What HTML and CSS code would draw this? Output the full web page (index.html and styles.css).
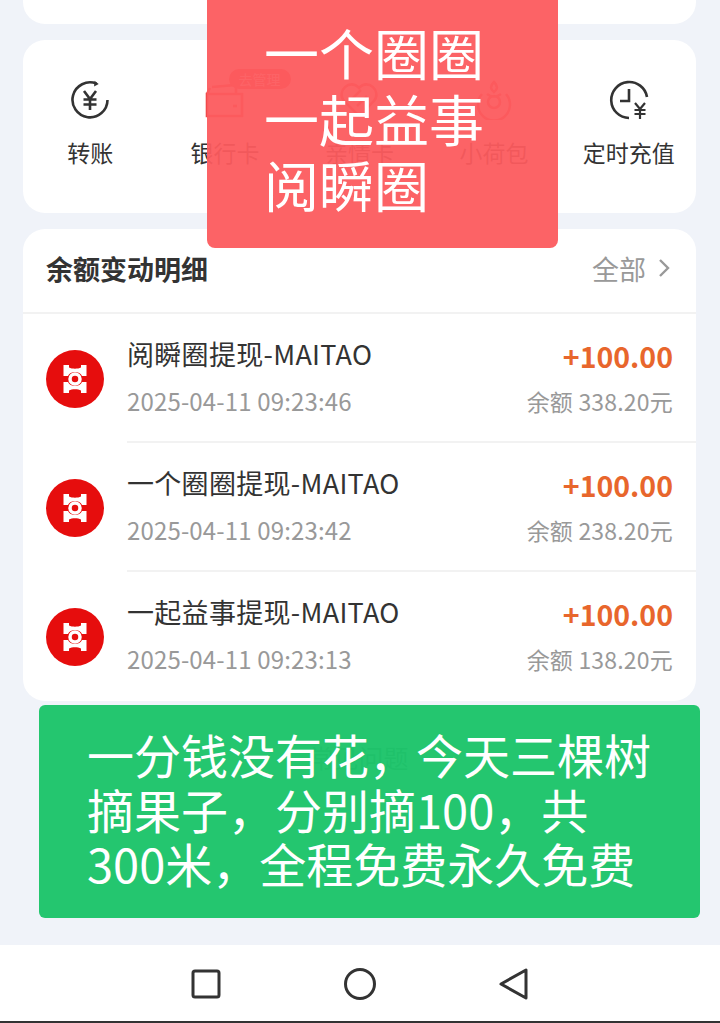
FILE: index.html
```html
<!DOCTYPE html>
<html lang="zh-CN">
<head>
  <meta charset="UTF-8">
  <meta name="viewport" content="width=device-width, initial-scale=1.0">
  <title>余额</title>
  <link rel="stylesheet" href="styles.css">
</head>
<body>
  <div class="screen">
    <main class="content">
      <div class="card card-stub"></div>

      <!-- Shortcuts -->
      <section class="card shortcuts">
        <div class="shortcut">
          <svg class="shortcut-icon" viewBox="0 0 40 40">
            <path d="M26.5 3.6A17.5 17.5 0 1 0 37.5 20" />
            <path d="M24.5 .8l4.2 3.2-4.6 2.6" class="solid" />
            <path d="M14 11l6 8 6-8M13.5 19.5h13M13.5 24.5h13M20 19v11" />
          </svg>
          <span class="shortcut-label">转账</span>
        </div>
        <div class="shortcut">
          <span class="badge">去管理</span>
          <svg class="shortcut-icon tinted" viewBox="0 0 40 40">
            <path d="M7 7l24-2v9M2 14h35v22H2zM2 14l3-6" />
            <path d="M28 26h4" />
          </svg>
          <span class="shortcut-label">银行卡</span>
        </div>
        <div class="shortcut">
          <svg class="shortcut-icon tinted" viewBox="0 0 40 40">
            <path d="M20 36L5 21C-3 11 11 -2 20 8c9-10 23 3 15 13l-9 9" />
            <path d="M12 20l10-10M18 26l10-10" />
          </svg>
          <span class="shortcut-label">亲情卡</span>
        </div>
        <div class="shortcut">
          <svg class="shortcut-icon tinted" viewBox="0 0 40 40">
            <circle cx="20" cy="22" r="6" />
            <path d="M8 14a16 16 0 1 0 24 0M20 2c-4 4-4 7 0 10 4-3 4-6 0-10zM13 14a11 11 0 0 0 14 0" />
          </svg>
          <span class="shortcut-label">小荷包</span>
        </div>
        <div class="shortcut">
          <svg class="shortcut-icon" viewBox="0 0 40 40">
            <path d="M38 17A18 18 0 1 0 20 38" />
            <path d="M20 9v12h-9" />
            <path d="M26 23l5 6 5-6M25.5 30h11M25.5 34h11M31 29v10" class="thin" />
          </svg>
          <span class="shortcut-label">定时充值</span>
        </div>
      </section>

      <!-- Balance changes -->
      <section class="card ledger">
        <header class="ledger-head">
          <h2 class="ledger-title">余额变动明细</h2>
          <span class="ledger-all">全部
            <svg class="chevron" viewBox="0 0 12 20"><path d="M2 2l8 8-8 8" /></svg>
          </span>
        </header>

        <div class="entry">
          <svg class="entry-logo" viewBox="0 0 58 58">
            <circle cx="29" cy="29" r="29" class="logo-bg" />
            <path class="logo-mark" d="M17.5 15h5.5v2.5c3 1.600 9 1.600 12 0V15h5.500v11H36c-1-2.500-4-4-7-4s-6 1.500-7 4h-4.500zM17.500 43h5.500v-2.500c3-1.600 9-1.600 12 0V43h5.500V32H36c-1 2.500-4 4-7 4s-6-1.500-7-4h-4.500z" />
            <circle cx="29" cy="29" r="5" class="logo-ring" />
          </svg>
          <div class="entry-body">
            <div class="entry-main">
              <span class="entry-name">阅瞬圈提现-MAITAO</span>
              <span class="entry-time">2025-04-11 09:23:46</span>
            </div>
            <div class="entry-side">
              <span class="entry-amount">+100.00</span>
              <span class="entry-balance">余额 338.20元</span>
            </div>
          </div>
        </div>

        <div class="entry">
          <svg class="entry-logo" viewBox="0 0 58 58">
            <circle cx="29" cy="29" r="29" class="logo-bg" />
            <path class="logo-mark" d="M17.5 15h5.5v2.5c3 1.600 9 1.600 12 0V15h5.500v11H36c-1-2.500-4-4-7-4s-6 1.500-7 4h-4.500zM17.500 43h5.500v-2.500c3-1.600 9-1.600 12 0V43h5.500V32H36c-1 2.500-4 4-7 4s-6-1.500-7-4h-4.500z" />
            <circle cx="29" cy="29" r="5" class="logo-ring" />
          </svg>
          <div class="entry-body">
            <div class="entry-main">
              <span class="entry-name">一个圈圈提现-MAITAO</span>
              <span class="entry-time">2025-04-11 09:23:42</span>
            </div>
            <div class="entry-side">
              <span class="entry-amount">+100.00</span>
              <span class="entry-balance">余额 238.20元</span>
            </div>
          </div>
        </div>

        <div class="entry">
          <svg class="entry-logo" viewBox="0 0 58 58">
            <circle cx="29" cy="29" r="29" class="logo-bg" />
            <path class="logo-mark" d="M17.5 15h5.5v2.5c3 1.600 9 1.600 12 0V15h5.500v11H36c-1-2.500-4-4-7-4s-6 1.500-7 4h-4.500zM17.500 43h5.500v-2.500c3-1.600 9-1.600 12 0V43h5.500V32H36c-1 2.500-4 4-7 4s-6-1.500-7-4h-4.500z" />
            <circle cx="29" cy="29" r="5" class="logo-ring" />
          </svg>
          <div class="entry-body">
            <div class="entry-main">
              <span class="entry-name">一起益事提现-MAITAO</span>
              <span class="entry-time">2025-04-11 09:23:13</span>
            </div>
            <div class="entry-side">
              <span class="entry-amount">+100.00</span>
              <span class="entry-balance">余额 138.20元</span>
            </div>
          </div>
        </div>
      </section>

      <div class="faq">常见问题</div>
    </main>

    <!-- Navigation bar -->
    <nav class="navbar">
      <svg class="nav-icon" viewBox="0 0 32 32"><rect x="3" y="3" width="26" height="26" rx="2" /></svg>
      <svg class="nav-icon" viewBox="0 0 32 32"><circle cx="16" cy="16" r="14.5" /></svg>
      <svg class="nav-icon" viewBox="0 0 32 32"><path d="M28 2v28L3 16z" /></svg>
    </nav>

    <!-- Stickers pasted over the screenshot -->
    <div class="sticker sticker-red">一个圈圈<br>一起益事<br>阅瞬圈</div>
    <div class="sticker sticker-green">一分钱没有花，今天三棵树<br>摘果子，分别摘100，共<br>300米，全程免费永久免费</div>
  </div>
</body>
</html>
```

FILE: styles.css
```css
body {
  margin: 0;
  background: #f0f3f9;
  font-family: "Noto Sans CJK SC", "Noto Sans", sans-serif;
}

.screen {
  position: relative;
  width: 720px;
  height: 1023px;
  display: flex;
  flex-direction: column;
  overflow: hidden;
}

.content {
  flex: 1;
  display: flex;
  flex-direction: column;
  gap: 16px;
  padding: 0 24px 0 23px;
}

.card {
  background: #fff;
  border-radius: 22px;
}

.card-stub {
  height: 24px;
  border-radius: 0 0 22px 22px;
}

/* Shortcuts row */
.shortcuts {
  height: 173px;
  display: grid;
  grid-template-columns: repeat(5, 1fr);
}

.shortcut {
  position: relative;
  display: flex;
  flex-direction: column;
  align-items: center;
  padding-top: 40px;
}

.shortcut-icon {
  width: 40px;
  height: 40px;
  fill: none;
  stroke: #333;
  stroke-width: 2.6;
}

.shortcut-icon .solid {
  fill: #333;
  stroke: none;
}

.shortcut-icon .thin {
  stroke-width: 2.2;
}

.shortcut-icon.tinted {
  stroke: #f04a4a;
}

.shortcut-label {
  margin-top: 16px;
  font-size: 23px;
  line-height: 32px;
  color: #333;
}

.badge {
  position: absolute;
  top: 29px;
  left: 71px;
  width: 62px;
  font-size: 14px;
  line-height: 20px;
  text-align: center;
  color: #fff;
  background: #f04a4a;
  border-radius: 10px;
}

/* Ledger card */
.ledger-head {
  height: 85px;
  display: flex;
  align-items: center;
  justify-content: space-between;
  padding: 0 26px 5px 23px;
  border-bottom: 2px solid #f2f2f2;
  box-sizing: border-box;
}

.ledger-title {
  margin: 0;
  font-size: 27px;
  font-weight: 700;
  color: #333;
}

.ledger-all {
  display: flex;
  align-items: center;
  gap: 12px;
  font-size: 27px;
  color: #999;
}

.chevron {
  width: 12px;
  height: 20px;
  fill: none;
  stroke: #999;
  stroke-width: 2.4;
}

.entry {
  height: 129px;
  display: flex;
  align-items: center;
  padding-left: 23px;
}

.entry-logo {
  flex: none;
  width: 58px;
  height: 58px;
  margin-right: 23px;
}

.logo-bg { fill: #e60d0d; }
.logo-mark { fill: #fff; }
.logo-ring { fill: #e60d0d; stroke: #fff; stroke-width: 3.5; }

.entry-body {
  flex: 1;
  align-self: stretch;
  display: flex;
  justify-content: space-between;
  align-items: center;
  padding-right: 23px;
  border-bottom: 2px solid #f2f2f2;
}

.entry:last-child .entry-body {
  border-bottom-color: transparent;
}

.entry-main,
.entry-side {
  display: flex;
  flex-direction: column;
  gap: 10px;
}

.entry-main {
  gap: 12px;
  padding-bottom: 2px;
}

.entry-side {
  align-items: flex-end;
}

.entry-name {
  font-size: 27px;
  line-height: 36px;
  letter-spacing: 0.3px;
  color: #333;
}

.entry-time,
.entry-balance {
  font-size: 23px;
  line-height: 34px;
  color: #999;
}

.entry-time {
  font-size: 24px;
  letter-spacing: 0.15px;
}

.entry-balance {
  letter-spacing: 0.2px;
}

.entry-amount {
  font-size: 28.5px;
  line-height: 36px;
  font-weight: 700;
  color: #e8662c;
}

.faq {
  margin-top: 22px;
  padding-right: 2px;
  text-align: center;
  font-size: 25px;
  color: #666;
}

/* Bottom navigation */
.navbar {
  flex: none;
  height: 78px;
  box-sizing: border-box;
  padding-top: 2px;
  display: flex;
  justify-content: center;
  align-items: center;
  gap: 122px;
  background: #fff;
  border-bottom: 2px solid #333;
}

.nav-icon {
  width: 32px;
  height: 32px;
  fill: none;
  stroke: #333;
  stroke-width: 3;
  stroke-linejoin: round;
}

/* Stickers */
.sticker {
  position: absolute;
  color: #fff;
  box-sizing: border-box;
}

.sticker-red {
  top: -8px;
  left: 207px;
  width: 351px;
  height: 256px;
  padding: 26px 0 0 57px;
  font-size: 55px;
  line-height: 66px;
  background: rgba(252, 91, 94, 0.95);
  border-radius: 8px;
}

.sticker-green {
  top: 705px;
  left: 39px;
  width: 661px;
  height: 213px;
  padding: 22px 0 0 48px;
  font-size: 47px;
  line-height: 54.5px;
  background: rgba(29, 196, 106, 0.97);
  border-radius: 6px;
}
```
